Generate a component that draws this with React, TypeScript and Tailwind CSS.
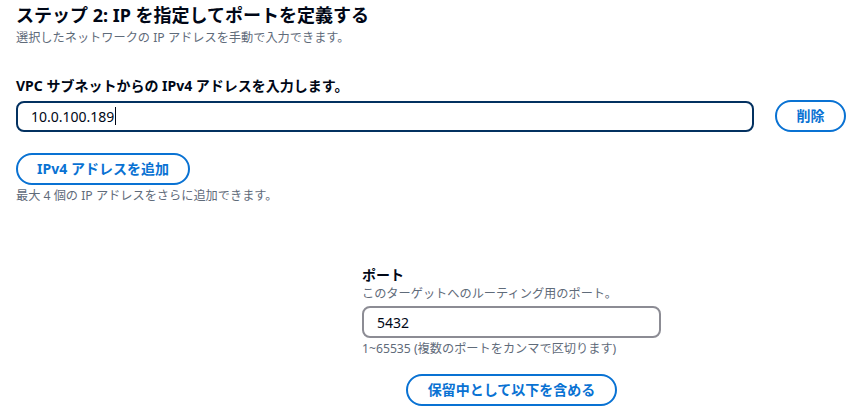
import React from "react";

const font = { fontFamily: '"Noto Sans", "Noto Sans CJK JP", sans-serif' };

function PillButton({ children, className = "" }: { children: React.ReactNode; className?: string }) {
  return (
    <button
      className={`h-[32px] whitespace-nowrap rounded-full border-2 border-[#0972d3] bg-white text-[14px] font-bold leading-[18px] text-[#0972d3] ${className}`}
    >
      {children}
    </button>
  );
}

export default function App() {
  return (
    <div className="h-[410px] w-[853px] overflow-hidden bg-white text-[#000716]" style={font}>
      <div className="px-[16px] pt-[4px]">
        <h2 className="text-[18px] font-bold leading-[22px]">ステップ 2: IP を指定してポートを定義する</h2>
        <p className="mt-[4px] text-[12.2px] leading-[16px] text-[#5f6b7a]">
          選択したネットワークの IP アドレスを手動で入力できます。
        </p>

        <div className="mt-[31px] text-[14px] font-bold leading-[18px]">
          VPC サブネットからの IPv4 アドレスを入力します。
        </div>
        <div className="mt-[5px] flex items-center gap-[21px]">
          <div className="flex h-[31px] flex-1 items-center rounded-[8px] border-2 border-[#033160] px-[13px] text-[14px]">
            <span>10.0.100.189</span>
            <span className="ml-[1px] h-[18px] w-[1px] bg-[#000716]" />
          </div>
          <PillButton className="mr-[-9px] w-[71px] shrink-0">削除</PillButton>
        </div>

        <PillButton className="mt-[21px] w-[174px]">IPv4 アドレスを追加</PillButton>
        <p className="mt-[3px] text-[12.2px] leading-[16px] text-[#5f6b7a]">
          最大 4 個の IP アドレスをさらに追加できます。
        </p>

        <div className="ml-[346px] mt-[62px] w-[299px]">
          <div className="text-[14px] font-bold leading-[18px]">ポート</div>
          <p className="mt-[2px] text-[12.2px] leading-[16px] text-[#5f6b7a]">
            このターゲットへのルーティング用のポート。
          </p>
          <div className="mt-[4px] flex h-[32px] items-center rounded-[8px] border-2 border-[#8c8c94] px-[13px] text-[14px]">
            5432
          </div>
          <p className="mt-[3px] text-[12.2px] leading-[16px] text-[#5f6b7a]">
            1~65535 (複数のポートをカンマで区切ります)
          </p>
          <div className="mt-[17px] flex justify-center">
            <PillButton className="w-[211px]">保留中として以下を含める</PillButton>
          </div>
        </div>
      </div>
    </div>
  );
}
